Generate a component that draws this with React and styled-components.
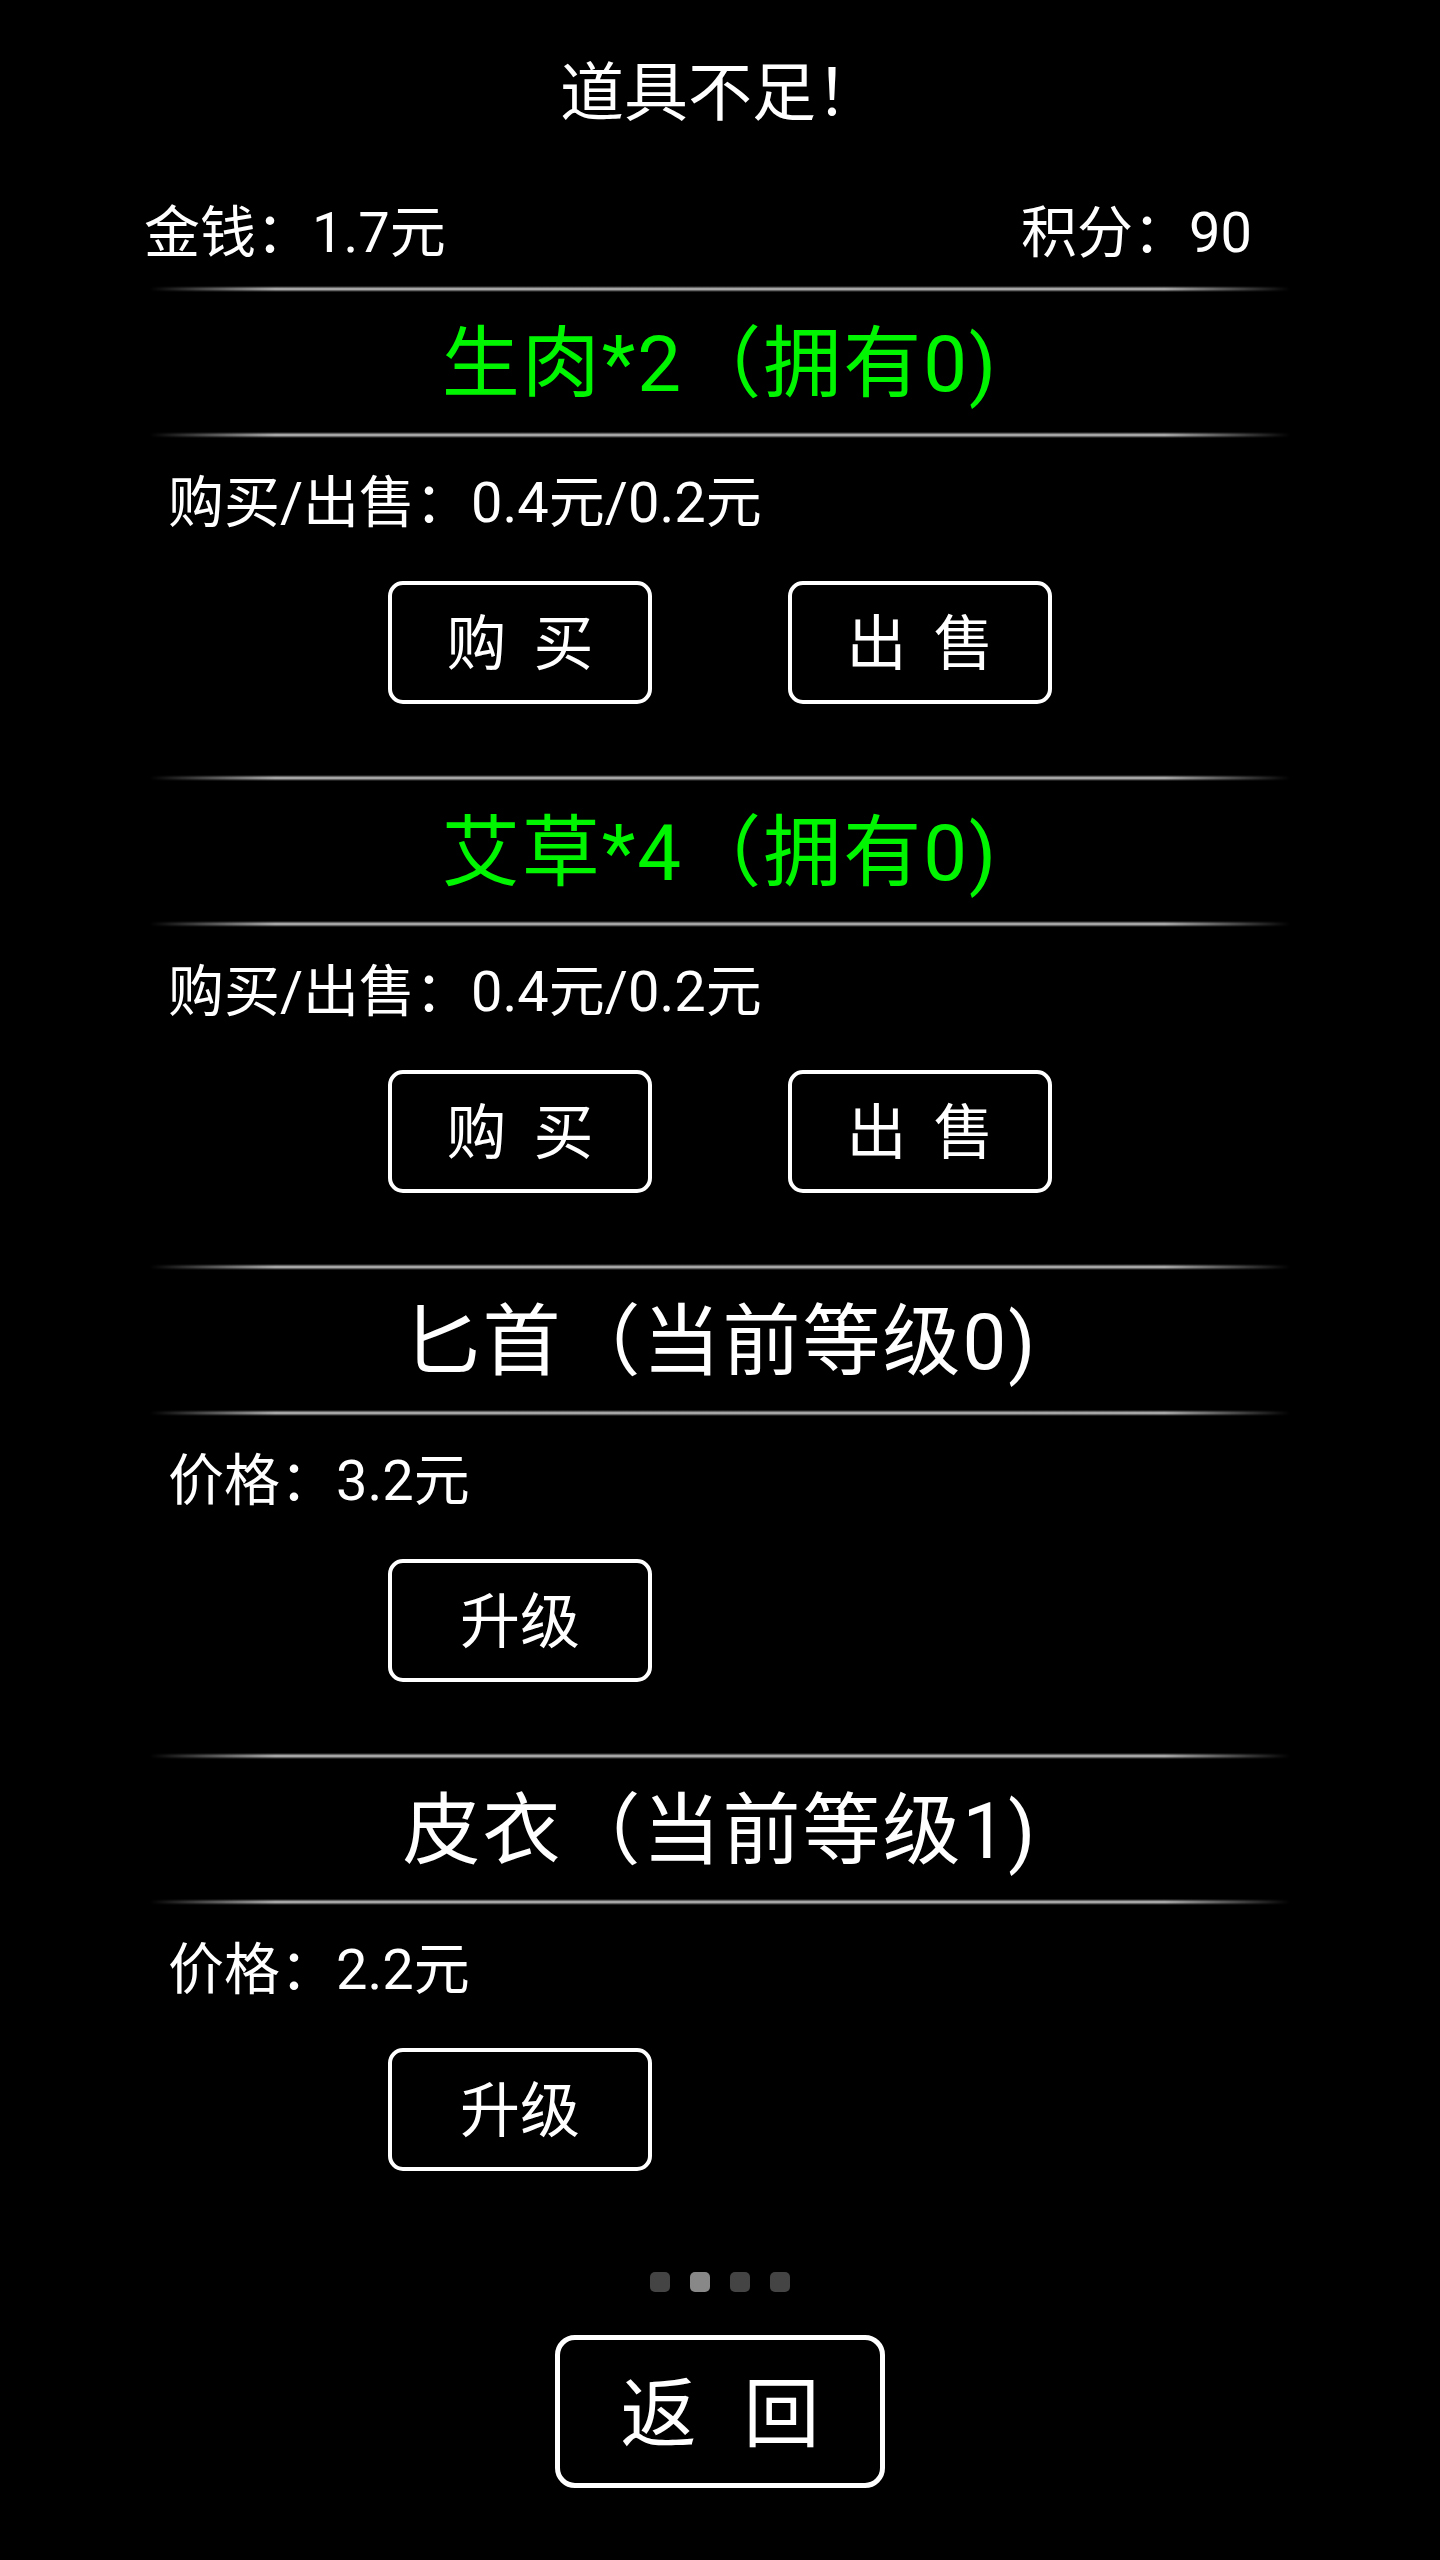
import styled, { createGlobalStyle } from 'styled-components'

const GlobalStyle = createGlobalStyle`
	html, body {
		margin: 0;
		padding: 0;
		background: #000;
	}
	body {
		font-family: Roboto, "Noto Sans CJK SC", sans-serif;
		color: #fff;
	}
`

const Page = styled.div`
	width: 1440px;
	min-height: 2560px;
	background: #000;
	display: flex;
	flex-direction: column;
`

// text boxes are nudged up a little so the glyphs sit on the box centre
const Title = styled.div`
	height: 184px;
	box-sizing: border-box;
	padding-bottom: 10px;
	display: flex;
	align-items: center;
	justify-content: center;
	font-size: 64px;
`

const Stats = styled.div`
	height: 96px;
	box-sizing: border-box;
	padding: 0 188px 10px 144px;
	display: flex;
	align-items: center;
	justify-content: space-between;
	font-size: 56px;
	margin-bottom: 6px;
`

const Section = styled.section`
	display: flex;
	flex-direction: column;
	margin-bottom: 71px;
`

const Divider = styled.div`
	width: 1140px;
	height: 6px;
	margin: 0 auto;
	background: linear-gradient(to bottom, rgba(200, 200, 200, 0) 0%, rgba(210, 210, 210, 0.95) 50%, rgba(200, 200, 200, 0) 100%);
	-webkit-mask-image: linear-gradient(to right, transparent 0%, #000 11%, #000 89%, transparent 100%);
	mask-image: linear-gradient(to right, transparent 0%, #000 11%, #000 89%, transparent 100%);
`

const Heading = styled.div`
	height: 140px;
	box-sizing: border-box;
	padding-bottom: 10px;
	display: flex;
	align-items: center;
	justify-content: center;
	font-size: 78px;
	letter-spacing: 2px;
	color: ${p => (p.$green ? '#00f500' : '#fff')};
`

const Price = styled.div`
	height: 128px;
	box-sizing: border-box;
	padding: 0 0 10px 168px;
	display: flex;
	align-items: center;
	font-size: 56px;
`

const Actions = styled.div`
	margin-top: 15px;
	display: grid;
	grid-template-columns: 264px 264px;
	column-gap: 136px;
	justify-content: center;
`

const Button = styled.button`
	height: 123px;
	box-sizing: border-box;
	border: 4px solid #fff;
	border-radius: 15px;
	background: #000;
	color: #fff;
	font-family: inherit;
	font-size: 60px;
	word-spacing: 12px;
	padding: 0 0 8px;
	display: flex;
	align-items: center;
	justify-content: center;
`

const Pager = styled.div`
	margin-top: 30px;
	display: flex;
	justify-content: center;
	gap: 20px;
`

const Dot = styled.span`
	width: 20px;
	height: 20px;
	border-radius: 5px;
	background: ${p => (p.$active ? '#888' : '#444')};
`

const BackButton = styled(Button)`
	align-self: center;
	margin-top: 43px;
	width: 330px;
	height: 153px;
	border-width: 5px;
	border-radius: 20px;
	font-size: 76px;
	word-spacing: 28px;
`

const items = [
	{ name: '生肉*2（拥有0)', green: true, price: '购买/出售：0.4元/0.2元', actions: ['购 买', '出 售'] },
	{ name: '艾草*4（拥有0)', green: true, price: '购买/出售：0.4元/0.2元', actions: ['购 买', '出 售'] },
	{ name: '匕首（当前等级0)', price: '价格：3.2元', actions: ['升级'] },
	{ name: '皮衣（当前等级1)', price: '价格：2.2元', actions: ['升级'] },
]

export default function App() {
	return (
		<>
			<GlobalStyle />
			<Page>
				<Title>道具不足！</Title>
				<Stats>
					<span>金钱：1.7元</span>
					<span>积分：90</span>
				</Stats>
				{items.map(item => (
					<Section key={item.name}>
						<Divider />
						<Heading $green={item.green}>{item.name}</Heading>
						<Divider />
						<Price>{item.price}</Price>
						<Actions>
							{item.actions.map(a => (
								<Button key={a}>{a}</Button>
							))}
						</Actions>
					</Section>
				))}
				<Pager>
					<Dot />
					<Dot $active />
					<Dot />
					<Dot />
				</Pager>
				<BackButton>返 回</BackButton>
			</Page>
		</>
	)
}
